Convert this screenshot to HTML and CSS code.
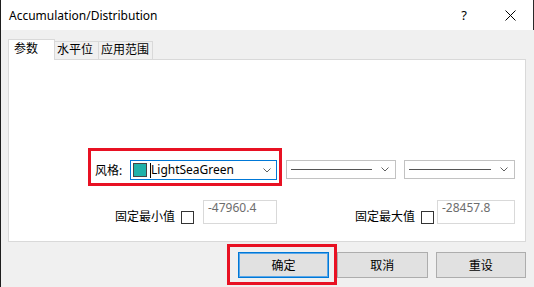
FILE: index.html
```html
<!DOCTYPE html>
<html>
<head>
<meta charset="utf-8">
<link rel="stylesheet" href="styles.css">
</head>
<body>
<div class="window">
  <div class="titlebar">
    <span class="title">Accumulation/Distribution</span>
    <span class="tbtn help">?</span>
    <span class="tbtn close"><svg width="11" height="11" viewBox="0 0 11 11"><path d="M0.5 0.5L10.5 10.5M10.5 0.5L0.5 10.5" stroke="#000" stroke-width="1" fill="none"/></svg></span>
  </div>
  <div class="body">
    <div class="tabs">
      <div class="tab active">参数</div>
      <div class="tab t2">水平位</div>
      <div class="tab t3">应用范围</div>
    </div>
    <div class="panel">
      <div class="row1">
        <div class="mark style-mark">
          <span class="lbl">风格:</span>
          <div class="combo focus">
            <span class="swatch"></span><span class="caret"></span><span class="ctext">LightSeaGreen</span>
            <svg class="chev" width="8" height="5" viewBox="0 0 8 5"><path d="M0.5 0.5L4 4L7.5 0.5" stroke="#606060" fill="none"/></svg>
          </div>
        </div>
        <div class="combo linecombo w1"><span class="line"></span><svg class="chev" width="8" height="5" viewBox="0 0 8 5"><path d="M0.5 0.5L4 4L7.5 0.5" stroke="#606060" fill="none"/></svg></div>
        <div class="combo linecombo w2"><span class="line"></span><svg class="chev" width="8" height="5" viewBox="0 0 8 5"><path d="M0.5 0.5L4 4L7.5 0.5" stroke="#606060" fill="none"/></svg></div>
      </div>
      <div class="row2">
        <span class="flbl l1">固定最小值</span>
        <span class="check c1"></span>
        <span class="field f1">-47960.4</span>
        <span class="flbl l2">固定最大值</span>
        <span class="check c2"></span>
        <span class="field f2">-28457.8</span>
      </div>
    </div>
    <div class="buttons">
      <div class="mark btn-mark"><div class="btn default">确定</div></div>
      <div class="btn plain">取消</div>
      <div class="btn plain reset">重设</div>
    </div>
  </div>
</div>
</body>
</html>
```
FILE: styles.css
```css
body {
  margin: 0;
  font-family: "Noto Sans", "Noto Sans CJK SC", sans-serif;
  font-size: 12px;
  color: #000;
  background: #f0f0f0;
}
.window {
  width: 534px;
  height: 287px;
  box-sizing: border-box;
  border-left: 1px solid #1e1e1e;
  background: #f0f0f0;
  overflow: hidden;
}
.titlebar {
  height: 30px;
  box-sizing: border-box;
  background: #fff;
  display: flex;
  align-items: center;
  padding-left: 8px;
  border-right: 1px solid #2a2a2a;
}
.title {
  flex: 1;
  font-size: 12px;
}
.tbtn {
  width: 46px;
  height: 30px;
  display: flex;
  align-items: center;
  justify-content: center;
}
.help {
  font-size: 13px;
}
.body {
  padding: 9px 8px 0 7px;
}
.tabs {
  display: flex;
  height: 20px;
  align-items: flex-end;
  position: relative;
  z-index: 1;
}
.tab {
  height: 18px;
  box-sizing: border-box;
  border: 1px solid #d9d9d9;
  border-bottom: none;
  background: #f0f0f0;
  line-height: 16px;
  padding-left: 2px;
  margin-left: -1px;
  color: #000;
  white-space: nowrap;
}
.tab.active {
  height: 21px;
  margin-bottom: -1px;
  margin-left: 0;
  background: #fff;
  width: 47px;
  padding-left: 5px;
  padding-top: 1px;
  position: relative;
  z-index: 2;
}
.t2 { width: 45px; }
.t3 { width: 55px; }
.panel {
  height: 183px;
  box-sizing: border-box;
  border: 1px solid #d9d9d9;
  background: #fff;
  padding-top: 88px;
}
.row1 {
  display: flex;
  align-items: flex-start;
  margin-left: 79px;
}
.mark {
  border: 3px solid #e81123;
  display: flex;
}
.style-mark {
  padding: 9px 2px 3px 4px;
  align-items: center;
}
.lbl {
  width: 27px;
  margin-right: 8px;
  line-height: 17px;
  white-space: nowrap;
}
.combo {
  box-sizing: border-box;
  display: flex;
  align-items: center;
  background: #fff;
}
.combo.focus {
  width: 147px;
  height: 20px;
  border: 1px solid #0078d7;
  padding: 0 5px 0 2px;
}
.swatch {
  width: 14px;
  height: 14px;
  box-sizing: border-box;
  border: 1px solid #444;
  background: #20b2aa;
}
.caret {
  width: 1px;
  height: 15px;
  background: #000;
  margin-left: 3px;
}
.ctext {
  flex: 1;
  line-height: 16px;
  white-space: nowrap;
}
.linecombo {
  margin-top: 12px;
  height: 19px;
  border: 1px solid #c2c2c2;
  padding: 0 6px 0 4px;
}
.w1 { margin-left: 4px; width: 110px; }
.w2 { margin-left: 8px; width: 111px; }
.line {
  flex: 1;
  height: 1px;
  background: #555;
  margin-right: 9px;
}
.row2 {
  display: flex;
  align-items: flex-start;
  margin-top: 14px;
}
.flbl {
  width: 60px;
  margin-top: 8px;
  line-height: 17px;
  white-space: nowrap;
}
.l1 { margin-left: 106px; }
.l2 { margin-left: 78px; }
.check {
  width: 13px;
  height: 13px;
  box-sizing: border-box;
  border: 1px solid #333;
  background: #fff;
  margin-top: 11px;
  margin-left: 6px;
}
.field {
  height: 24px;
  box-sizing: border-box;
  border: 1px solid #d9d9d9;
  background: #fff;
  color: #6d6d6d;
  padding-left: 4px;
  line-height: 13px;
  white-space: nowrap;
}
.f1 { margin-left: 9px; width: 74px; }
.f2 { margin-left: 3px; width: 78px; }
.buttons {
  display: flex;
  align-items: flex-start;
  margin-top: 2px;
  margin-left: 219px;
}
.btn-mark {
  padding: 5px 5px 4px 8px;
}
.btn {
  width: 91px;
  height: 26px;
  box-sizing: border-box;
  border: 1px solid #adadad;
  background: #e1e1e1;
  display: flex;
  align-items: center;
  justify-content: center;
}
.btn.default {
  border: 1px solid #0078d7;
  box-shadow: inset 0 0 0 1px #5aa7e8;
}
.btn.plain {
  margin-top: 8px;
}
.reset {
  margin-left: 8px;
}
```
